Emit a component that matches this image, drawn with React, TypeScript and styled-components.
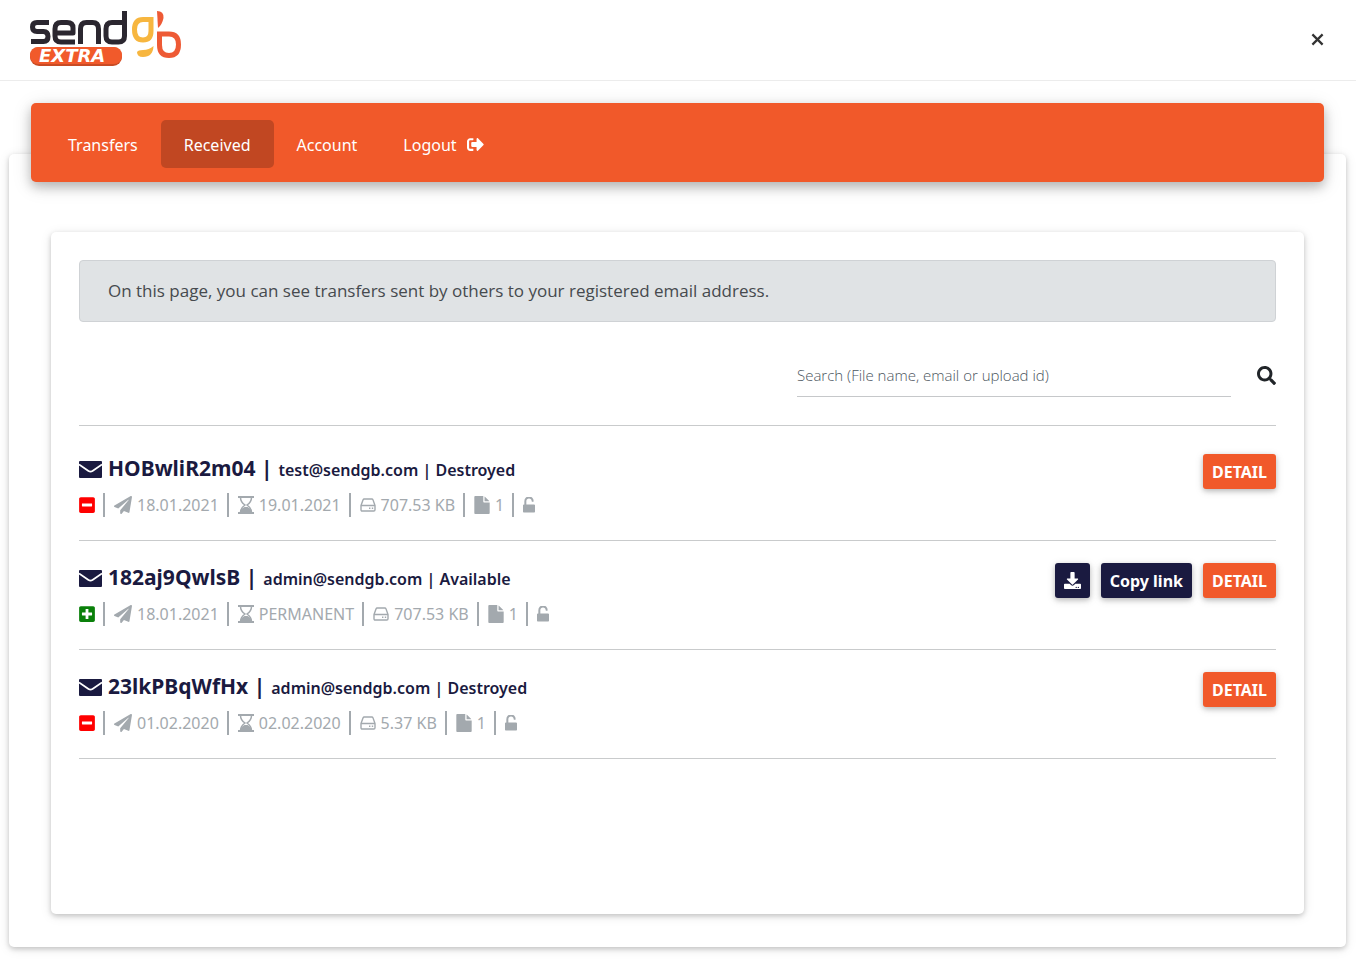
import React from "react";
import styled, { createGlobalStyle } from "styled-components";
import { FaDownload, FaMinusSquare, FaPaperPlane, FaPlusSquare, FaSearch, FaSignOutAlt } from "react-icons/fa";

const GlobalStyle = createGlobalStyle`
  * { box-sizing: border-box; }
  body {
    margin: 0;
    background: #fff;
    color: #1a1a40;
    font-family: "Noto Sans", "Open Sans", sans-serif;
  }
`;

const Page = styled.div`
  display: flex;
  flex-direction: column;
`;

const Header = styled.header`
  display: flex;
  align-items: center;
  justify-content: space-between;
  height: 81px;
  padding: 0 28px 2px;
  border-bottom: 1px solid #ececec;
`;

const LogoLink = styled.a`
  display: block;
  height: 60px;
  svg { display: block; }
`;

const CloseButton = styled.button`
  display: flex;
  padding: 4px;
  border: 0;
  background: none;
  color: #333;
  cursor: pointer;
`;

const Main = styled.main`
  padding: 22px 10px 15px 9px;
`;

const Nav = styled.nav`
  position: relative;
  display: flex;
  align-items: center;
  height: 79px;
  margin: 0 22px -28px;
  padding: 2px 14px 0;
  border-radius: 5px;
  background: #f1592a;
  box-shadow: 0 5px 11px rgba(0, 0, 0, 0.22), 0 4px 20px rgba(0, 0, 0, 0.13);
`;

const NavLink = styled.a<{ $active?: boolean }>`
  display: flex;
  align-items: center;
  gap: 10px;
  height: 48px;
  padding: 2px 23px 0;
  border-radius: 5px;
  background: ${(p) => (p.$active ? "#c14722" : "transparent")};
  color: #fff;
  font-size: 16px;
  line-height: 24px;
  text-decoration: none;
`;

const Panel = styled.div`
  padding: 78px 42px 33px;
  border-radius: 5px;
  background: #fff;
  box-shadow: 0 2px 5px rgba(0, 0, 0, 0.18), 0 2px 12px rgba(0, 0, 0, 0.1);
`;

const Card = styled.section`
  min-height: 682px;
  padding: 28px;
  border-radius: 5px;
  background: #fff;
  box-shadow: 0 2px 5px rgba(0, 0, 0, 0.18), 0 2px 12px rgba(0, 0, 0, 0.1);
`;

const Notice = styled.p`
  margin: 0;
  padding: 18px 28px;
  border: 1px solid #cfd2d5;
  border-radius: 4px;
  background: #e0e3e5;
  color: #464a4e;
  font-family: "Open Sans", "Noto Sans", sans-serif;
  font-size: 17px;
  line-height: 24px;
`;

const SearchForm = styled.form`
  display: flex;
  align-items: center;
  justify-content: flex-end;
  gap: 26px;
  padding: 32px 0 28px;
`;

const SearchInput = styled.input`
  width: 434px;
  height: 43px;
  padding: 0;
  border: 0;
  border-bottom: 1px solid #c6c8ca;
  outline: 0;
  background: transparent;
  font: 300 15px/20px "Open Sans", "Noto Sans", sans-serif;
  &::placeholder { color: #4c5660; opacity: 1; }
`;

const SearchButton = styled.button`
  display: flex;
  padding: 0;
  border: 0;
  background: none;
  color: #212529;
  font-size: 19px;
  cursor: pointer;
`;

const List = styled.ul`
  margin: 0;
  padding: 0;
  border-top: 1px solid #c9cbcc;
  list-style: none;
`;

const Row = styled.li`
  display: flex;
  align-items: flex-start;
  justify-content: space-between;
  height: 109px;
  padding-top: 22px;
  border-bottom: 1px solid #c9cbcc;
  &:first-child { height: 115px; padding-top: 28px; }
`;

const Title = styled.h2`
  display: flex;
  align-items: baseline;
  gap: 6px;
  margin: 0;
  font-size: 21px;
  line-height: 28px;
  font-weight: 700;
  white-space: pre;
`;

const TitleIcon = styled.span`
  display: flex;
  align-self: center;
`;

const Sender = styled.small`
  font-size: 16px;
  font-weight: 600;
`;

const Meta = styled.div`
  display: flex;
  height: 24px;
  margin-top: 9px;
  color: #a3a9ae;
  font-size: 16px;
  line-height: 24px;
`;

const MetaItem = styled.span`
  display: flex;
  align-items: center;
  gap: 5px;
  &:not(:first-child) {
    margin-left: 8px;
    padding-left: 9px;
    border-left: 2px solid #a3a9ae;
  }
`;

const State = styled.span<{ $on: boolean }>`
  display: flex;
  margin: 0 -1px;
  color: ${(p) => (p.$on ? "#0a800a" : "#ff0000")};
  font-size: 18px;
`;

const Actions = styled.div`
  display: flex;
  gap: 11px;
`;

const Button = styled.button<{ $dark?: boolean }>`
  display: flex;
  align-items: center;
  justify-content: center;
  height: 35px;
  padding: 0 9px;
  border: 0;
  border-radius: 3px;
  background: ${(p) => (p.$dark ? "#1a1a40" : "#f1592a")};
  color: #fff;
  font: 700 16px/24px "Noto Sans", "Open Sans", sans-serif;
  box-shadow: 0 2px 5px rgba(0, 0, 0, 0.2), 0 2px 10px rgba(0, 0, 0, 0.12);
  cursor: pointer;
`;

const Logo = () => (
  <svg width="158" height="60" viewBox="28 9 158 60" role="img" aria-label="sendgb extra">
    <g fill="none" stroke="#2b2730" strokeWidth="5" strokeLinejoin="round">
      <path d="M49 22.500H37Q32.500 22.500 32.500 27Q32.500 31.500 37 31.500H43.500Q48 31.500 48 36.500Q48 41.500 43.500 41.500H31" />
      <path d="M75 42H61Q55 42 55 36V29Q55 22.500 61 22.500H67Q73 22.500 73 28V33H55" />
      <path d="M80.500 44V29Q80.500 22.500 86.500 22.500H92.500Q98.500 22.500 98.500 29V44" />
      <path d="M124.500 11V36Q124.500 42 118.500 42H112Q106 42 106 36V29Q106 22.500 112 22.500H124.500" />
    </g>
    <rect x="30" y="47" width="92" height="19" rx="9" fill="#c94b24" />
    <rect x="30" y="47" width="92" height="17" rx="8" fill="#f15a2b" />
    <text x="39" y="62" fill="#fff" fontFamily="DejaVu Sans" fontSize="18" fontWeight="700" fontStyle="italic">EXTRA</text>
    <path d="M151 19.500H143Q134.500 19.500 134.500 29.500Q134.500 40 143 40Q151 40 151 31Z" fill="none" stroke="#f7b63f" strokeWidth="5" />
    <path d="M137 52Q138 50 143 50Q149 50 153.500 46Q153 57 143 57Q137 57 137 52Z" fill="#f7b63f" />
    <path d="M157 11Q164 11 163.500 18Q162 25 158 28Z" fill="#ee5a35" />
    <path d="M159.500 34H169Q178.500 34 178.500 44.500Q178.500 55.500 169 55.500Q159.500 55.500 159.500 45Z" fill="none" stroke="#ee5a35" strokeWidth="5" />
  </svg>
);

const EnvelopeIcon = () => (
  <svg width="23" height="17" viewBox="0 0 23 17" aria-hidden="true">
    <rect width="23" height="17" rx="1" fill="currentColor" />
    <path d="M0 3.500 9.500 10Q11.500 11.200 13.500 10L23 3.500" fill="none" stroke="#fff" strokeWidth="1.800" />
  </svg>
);

const HourglassIcon = () => (
  <svg width="16" height="18" viewBox="0 0 16 18" aria-hidden="true">
    <path d="M0 1H16M0 17H16" stroke="currentColor" strokeWidth="1.800" />
    <path d="M2.500 1.500Q2.500 6 7 9Q2.500 12 2.500 16.500M13.500 1.500Q13.500 6 9 9Q13.500 12 13.500 16.500" fill="none" stroke="currentColor" strokeWidth="1.500" />
    <path d="M2.500 16.500Q2.500 12.500 6.500 11H9.500Q13.500 12.500 13.500 16.500Z" fill="currentColor" />
  </svg>
);

const DriveIcon = () => (
  <svg width="16" height="14" viewBox="0 0 16 14" fill="none" stroke="currentColor" strokeWidth="1.400" strokeLinejoin="round" aria-hidden="true">
    <path d="M1 7.500 3 1.900Q3.300 1 4.200 1H11.800Q12.700 1 13 1.900L15 7.500V11.800Q15 13 13.800 13H2.200Q1 13 1 11.800ZM1 7.500H15" />
    <path d="M9 10.300H10.400M11.800 10.300H13.200" />
  </svg>
);

const FileIcon = () => (
  <svg width="16" height="18" viewBox="96 0 1600 1792" fill="currentColor" aria-hidden="true">
    <path d="M1152 512v-472q22 14 36 28l408 408q14 14 28 36h-472zm-128 32q0 40 28 68t68 28h544v1056q0 40-28 68t-68 28h-1344q-40 0-68-28t-28-68v-1600q0-40 28-68t68-28h800v544z" />
  </svg>
);

const UnlockIcon = () => (
  <svg width="12" height="16" viewBox="320 100 1152 1436" fill="currentColor" role="img" aria-label="Unlocked">
    <path d="M1376 768q40 0 68 28t28 68v576q0 40-28 68t-68 28h-960q-40 0-68-28t-28-68v-576q0-40 28-68t68-28h32v-320q0-185 131.500-316.500t316.500-131.500 316.500 131.500 131.500 316.500q0 26-19 45t-45 19h-64q-26 0-45-19t-19-45q0-106-75-181t-181-75-181 75-75 181v320h736z" />
  </svg>
);

const transfers = [
  { id: "HOBwliR2m04", email: "test@sendgb.com", available: false, sent: "18.01.2021", expires: "19.01.2021", size: "707.53 KB" },
  { id: "182aj9QwlsB", email: "admin@sendgb.com", available: true, sent: "18.01.2021", expires: "PERMANENT", size: "707.53 KB" },
  { id: "23lkPBqWfHx", email: "admin@sendgb.com", available: false, sent: "01.02.2020", expires: "02.02.2020", size: "5.37 KB" },
];

export default function App() {
  return (
    <Page>
      <GlobalStyle />
      <Header>
        <LogoLink href="#home"><Logo /></LogoLink>
        <CloseButton aria-label="Close">
          <svg width="13" height="13" viewBox="0 0 14 14" fill="none" stroke="currentColor" strokeWidth="2.400">
            <path d="M1.500 1.500 12.500 12.500M12.500 1.500 1.500 12.500" />
          </svg>
        </CloseButton>
      </Header>
      <Main>
        <Nav>
          <NavLink href="#transfers">Transfers</NavLink>
          <NavLink href="#received" $active aria-current="page">Received</NavLink>
          <NavLink href="#account">Account</NavLink>
          <NavLink href="#logout">Logout <FaSignOutAlt size={17} /></NavLink>
        </Nav>
        <Panel>
          <Card>
            <Notice>On this page, you can see transfers sent by others to your registered email address.</Notice>
            <SearchForm onSubmit={(e) => e.preventDefault()}>
              <SearchInput type="text" aria-label="Search transfers" placeholder="Search (File name, email or upload id)" />
              <SearchButton aria-label="Search"><FaSearch /></SearchButton>
            </SearchForm>
            <List>
              {transfers.map((t) => (
                <Row key={t.id}>
                  <div>
                    <Title>
                      <TitleIcon><EnvelopeIcon /></TitleIcon>
                      <span>{t.id} |</span>
                      <Sender>{t.email} | {t.available ? "Available" : "Destroyed"}</Sender>
                    </Title>
                    <Meta>
                      <MetaItem><State $on={t.available}>{t.available ? <FaPlusSquare /> : <FaMinusSquare />}</State></MetaItem>
                      <MetaItem><FaPaperPlane size={18} />{t.sent}</MetaItem>
                      <MetaItem><HourglassIcon />{t.expires}</MetaItem>
                      <MetaItem><DriveIcon />{t.size}</MetaItem>
                      <MetaItem><FileIcon />1</MetaItem>
                      <MetaItem><UnlockIcon /></MetaItem>
                    </Meta>
                  </div>
                  <Actions>
                    {t.available && <Button $dark aria-label="Download"><FaDownload size={17} /></Button>}
                    {t.available && <Button $dark>Copy link</Button>}
                    <Button>DETAIL</Button>
                  </Actions>
                </Row>
              ))}
            </List>
          </Card>
        </Panel>
      </Main>
    </Page>
  );
}
